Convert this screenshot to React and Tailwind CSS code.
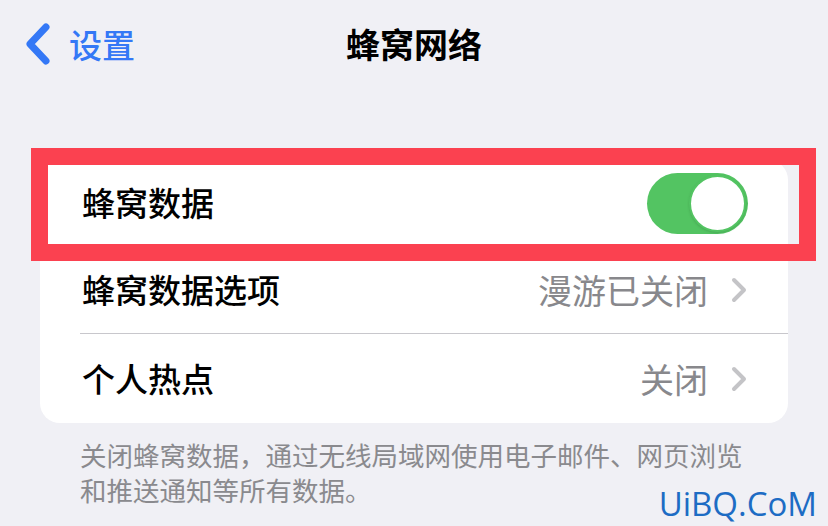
import { useState } from 'react'

const cjk = { fontFamily: '"Noto Sans CJK SC", "Noto Sans", sans-serif' }

function Chevron() {
  return (
    <svg width="18" height="26" viewBox="0 0 18 26" className="shrink-0">
      <polyline points="4,3 14,13 4,23" fill="none" stroke="#c4c4c7" strokeWidth="4" strokeLinecap="round" strokeLinejoin="round" />
    </svg>
  )
}

function Toggle({ on, onChange }) {
  return (
    <button
      onClick={onChange}
      className={`w-[101px] h-[61px] rounded-full flex items-center px-[2px] ${on ? 'bg-[#53c462] justify-end' : 'bg-[#e5e5ea] justify-start'}`}
    >
      <span className="w-[57px] h-[57px] rounded-full bg-white border-2 border-[#53c462] shadow-sm" />
    </button>
  )
}

export default function App() {
  const [cellular, setCellular] = useState(true)

  return (
    <div className="relative w-[828px] h-[526px] overflow-hidden bg-[#f0f0f5]" style={cjk}>
      {/* Nav bar */}
      <div className="flex items-center h-[88px]">
        <div className="w-[200px] flex items-center pl-[23px] gap-[16px] text-[#3478f6]">
          <svg width="30" height="42" viewBox="0 0 30 42">
            <polyline points="23,4 7,21 23,38" fill="none" stroke="#3478f6" strokeWidth="7" strokeLinecap="round" strokeLinejoin="round" />
          </svg>
          <span className="text-[33px] font-medium leading-none">设置</span>
        </div>
        <div className="flex-1 text-center text-[34px] font-semibold text-black leading-none">蜂窝网络</div>
        <div className="w-[200px]" />
      </div>

      {/* Group */}
      <div className="mx-[40px] mt-[72px] bg-white rounded-[20px]">
        <div className="h-[86px] flex items-center justify-between pl-[42px] pr-[40px]">
          <span className="text-[33px] font-medium text-black">蜂窝数据</span>
          <Toggle on={cellular} onChange={() => setCellular(c => !c)} />
        </div>
        <div className="h-[87px] flex items-center justify-between pl-[42px] pr-[40px]">
          <span className="text-[33px] font-medium text-black">蜂窝数据选项</span>
          <div className="flex items-center gap-[22px]">
            <span className="text-[34px] text-[#88888c]">漫游已关闭</span>
            <Chevron />
          </div>
        </div>
        <div className="ml-[40px] h-px bg-[#c8c7cc]" />
        <div className="h-[89px] flex items-center justify-between pl-[42px] pr-[40px]">
          <span className="text-[33px] font-medium text-black">个人热点</span>
          <div className="flex items-center gap-[22px]">
            <span className="text-[34px] text-[#88888c]">关闭</span>
            <Chevron />
          </div>
        </div>
      </div>

      <p className="pl-[80px] pr-[30px] pt-[14px] text-[26.5px] leading-[35px] text-[#8a8a8e]">
        关闭蜂窝数据，通过无线局域网使用电子邮件、网页浏览
        <br />
        和推送通知等所有数据。
      </p>

      {/* Highlight frame drawn over the first row */}
      <div className="absolute left-[31px] top-[148px] w-[785px] h-[113px] border-[17px] border-[#fb4150] pointer-events-none" />

      {/* Watermark */}
      <div
        className="absolute right-[11px] bottom-[6px] text-[33px] leading-none text-[#1d6cc4]"
        style={{ fontFamily: '"Open Sans", "Noto Sans", sans-serif' }}
      >
        UiBQ.CoM
      </div>
    </div>
  )
}
